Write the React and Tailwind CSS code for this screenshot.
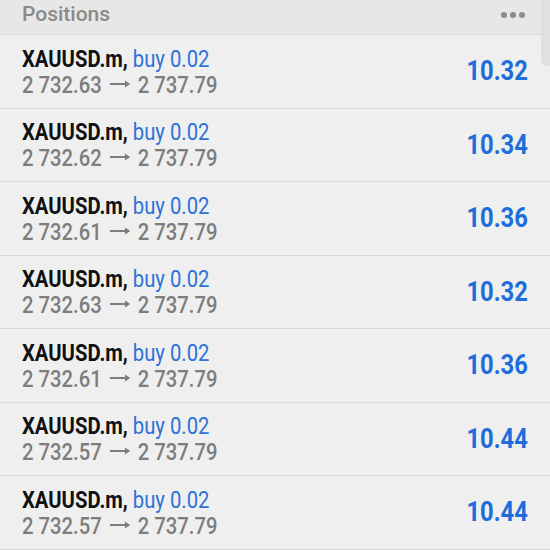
const rows = [
  ['2 732.63', '10.32'],
  ['2 732.62', '10.34'],
  ['2 732.61', '10.36'],
  ['2 732.63', '10.32'],
  ['2 732.61', '10.36'],
  ['2 732.57', '10.44'],
  ['2 732.57', '10.44'],
];

function Arrow() {
  return (
    <svg width="23" height="10" viewBox="0 0 23 10" className="inline-block mx-[9px] align-[4px]">
      <path d="M0 5H19" stroke="#7d7d7d" strokeWidth="2" />
      <path d="M17 1.5L23 5L17 8.5Z" fill="#7d7d7d" />
    </svg>
  );
}

export default function App() {
  return (
    <div className="relative w-[550px] h-[550px] overflow-hidden bg-[#efefef] font-['Roboto',sans-serif]">
      {/* scrollbar thumb */}
      <div className="absolute right-0 top-0 w-[9px] h-[66px] rounded-bl-[6px] bg-[#e0e0e0]" />

      <div className="flex items-center justify-between h-[35px] pb-[5px] pl-[22px] pr-[25px] bg-[#e7e7e7] border-b border-[#dadada]">
        <span className="text-[21px] font-medium text-[#8a8a8a]">Positions</span>
        <div className="flex gap-[3px]">
          <span className="w-[6px] h-[6px] rounded-full bg-[#8c8c8c]" />
          <span className="w-[6px] h-[6px] rounded-full bg-[#8c8c8c]" />
          <span className="w-[6px] h-[6px] rounded-full bg-[#8c8c8c]" />
        </div>
      </div>

      {rows.map(([open, profit], i) => (
        <div key={i} className="flex items-center justify-between h-[73.5px] pl-[22px] pr-[22px] border-b border-[#d9d9d9]">
          <div className="flex flex-col leading-[26px] pt-[3px] origin-left scale-x-[0.88] whitespace-nowrap">
            <div className="text-[23px]">
              <span className="font-bold text-[#111]">XAUUSD.m,</span>
              <span className="text-[#2c72d8]"> buy 0.02</span>
            </div>
            <div className="text-[23px] font-medium text-[#7d7d7d]">
              {open}<Arrow />2 737.79
            </div>
          </div>
          <span className="text-[27px] font-bold text-[#1d6ddb] origin-right scale-x-[0.88]">{profit}</span>
        </div>
      ))}
    </div>
  );
}
